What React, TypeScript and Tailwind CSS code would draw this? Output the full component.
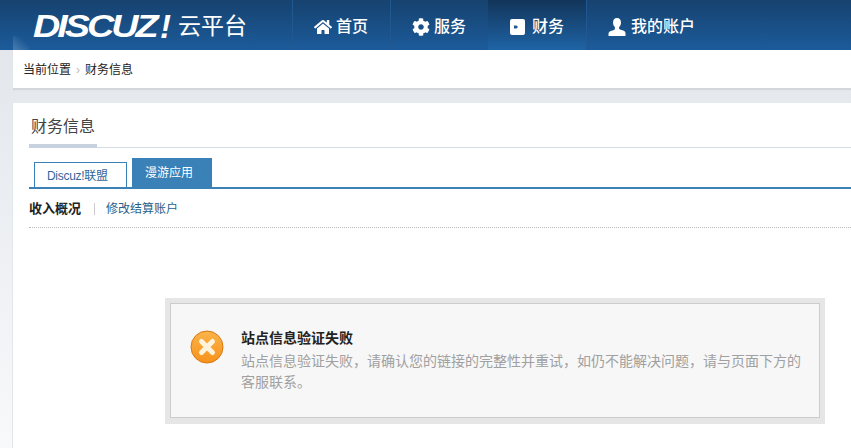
import React from 'react';
import { FaHome, FaCog } from 'react-icons/fa';

const cjk = '"Liberation Sans", "Noto Sans CJK SC", sans-serif';

const navItems = [
  { label: '首页', gap: 'gap-[4px]', icon: <FaHome className="h-[18px] w-[18px]" /> },
  { label: '服务', gap: 'gap-[4px]', icon: <FaCog className="h-[18px] w-[18px]" /> },
  {
    label: '财务',
    gap: 'gap-[7px]',
    active: true,
    icon: (
      <svg className="h-[16px] w-[15px]" viewBox="0 0 15 16">
        <rect width="15" height="16" rx="2" fill="#fff" />
        <path d="M4 6.5h2.5l1.5 1.5-1.5 1.5H4z" fill="#1c5892" />
      </svg>
    )
  },
  {
    label: '我的账户',
    gap: 'gap-[5px]',
    icon: (
      <svg className="h-[18px] w-[18px]" viewBox="0 0 18 18">
        <path
          d="M9 0c2.6 0 4 1.900 4 4.400 0 1.900-.8 3.600-1.900 4.600v1.500c0 .6 1 1 2.500 1.500 2 .7 3.900 1.300 3.900 3V18H.5v-2.500c0-1.700 1.900-2.300 3.900-3 1.500-.5 2.500-.9 2.500-1.500V9C5.800 8 5 6.300 5 4.400 5 1.900 6.400 0 9 0z"
          fill="#fff"
        />
      </svg>
    )
  }
];

const NavItem: React.FC<{ label: string; icon: React.ReactNode; gap: string; active?: boolean }> = ({
  label,
  icon,
  gap,
  active
}) => (
  <a
    className={
      active
        ? `flex h-full w-[98px] items-center bg-gradient-to-b from-[#12355a] to-[#1e64a6] pl-[22px] pt-[4px] text-white ${gap}`
        : `flex h-full min-w-[98px] items-center border-l border-[#20588f] pl-[21px] pt-[4px] text-white ${gap}`
    }
  >
    {icon}
    <span className="text-[16px] font-medium leading-none">{label}</span>
  </a>
);

const Header = () => (
  <div className="relative flex h-[50px] items-stretch bg-gradient-to-b from-[#16426f] to-[#1c5b9b]">
    <span className="absolute bottom-0 left-[13px] h-[14px] w-[16px] bg-gradient-to-tr from-[#4a7cae] to-transparent to-70%" />
    <div className="relative flex w-[292px] items-center pl-[33px] pt-[3px]">
      <span className="w-[127px] origin-left scale-x-[1.22] text-[31px] font-bold italic leading-none tracking-[-2.5px] text-white">
        DISCUZ
      </span>
      <span className="w-[18px] text-[33px] font-bold italic leading-none text-white">!</span>
      <span className="text-[23px] leading-none text-white">云平台</span>
    </div>
    <nav className="flex">
      {navItems.map(item => (
        <NavItem key={item.label} {...item} />
      ))}
    </nav>
  </div>
);

const Breadcrumb = () => (
  <div className="ml-[13px] flex h-[38px] items-center bg-white pl-[10px] pt-[1px] text-[12px] text-[#222] shadow-[0_2px_1px_#d3d6dc]">
    <span>当前位置</span>
    <span className="mx-[5px] w-[4px] text-[#bbb]">›</span>
    <span>财务信息</span>
  </div>
);

const Tabs = () => (
  <div className="ml-[16px] mt-[10px] flex items-end gap-[5px] border-b-2 border-[#3a81b8] pl-[5px]">
    <a className="flex h-[25px] w-[93px] items-center border border-b-0 border-[#3a81b8] pl-[12px] pt-[1px] text-[12px] tracking-[-0.3px] text-[#336699]">
      Discuz!联盟
    </a>
    <a className="flex h-[29px] w-[80px] items-center bg-[#3a81b8] pl-[13px] text-[12px] text-white">
      漫游应用
    </a>
  </div>
);

const ErrorIcon = () => (
  <svg className="h-[34px] w-[34px] shrink-0" viewBox="0 0 34 34">
    <defs>
      <linearGradient id="err" x1="0" y1="0" x2="0" y2="1">
        <stop offset="0" stopColor="#fbb44a" />
        <stop offset="1" stopColor="#f7921c" />
      </linearGradient>
    </defs>
    <circle cx="17" cy="17" r="16" fill="url(#err)" stroke="#d9780f" strokeWidth="1" />
    <path d="M11.5 11.500l11 11M22.500 11.500l-11 11" stroke="#fff3dc" strokeWidth="5" strokeLinecap="round" />
  </svg>
);

const Alert = () => (
  <div className="ml-[152px] mr-[26px] mt-[70px] bg-[#e6e6e6] px-[5px] pb-[6px] pt-[5px]">
    <div className="flex h-[115px] border border-[#cccccc] bg-[#f7f7f7] pl-[19px] pt-[26px]">
      <ErrorIcon />
      <div className="ml-[17px] w-[562px]">
        <h3 className="text-[14px] font-bold leading-[17px] text-[#222]">站点信息验证失败</h3>
        <p className="mt-[4px] text-[14px] leading-[21px] text-[#a0a0a0]">
          站点信息验证失败，请确认您的链接的完整性并重试，如仍不能解决问题，请与页面下方的客服联系。
        </p>
      </div>
    </div>
  </div>
);

export default function App() {
  return (
    <div
      className="h-[448px] w-[851px] overflow-hidden bg-gradient-to-b from-[#e3e7ec] from-[50px] to-[#f8f9fb] to-[448px]"
      style={{ fontFamily: cjk }}
    >
      <Header />
      <Breadcrumb />
      <main className="ml-[13px] mt-[15px] h-[345px] bg-white shadow-[-1px_0_0_#e2e5ea]">
        <div className="ml-[16px] border-b border-[#d5dbe5] pt-[15px]">
          <h2 className="-mb-px h-[30px] w-[68px] border-b-[4px] border-[#c8d1e0] pl-[2px] text-[16px] leading-[18px] text-[#444]">
            财务信息
          </h2>
        </div>
        <Tabs />
        <div className="ml-[16px] flex h-[39px] items-center border-b border-dotted border-[#bbb] pt-[1px]">
          <span className="text-[13px] font-bold text-[#222]">收入概况</span>
          <span className="ml-[13px] mr-[11px] h-[12px] w-px bg-[#ccc]" />
          <a className="text-[12px] text-[#2a5f8a]">修改结算账户</a>
        </div>
        <Alert />
      </main>
    </div>
  );
}
